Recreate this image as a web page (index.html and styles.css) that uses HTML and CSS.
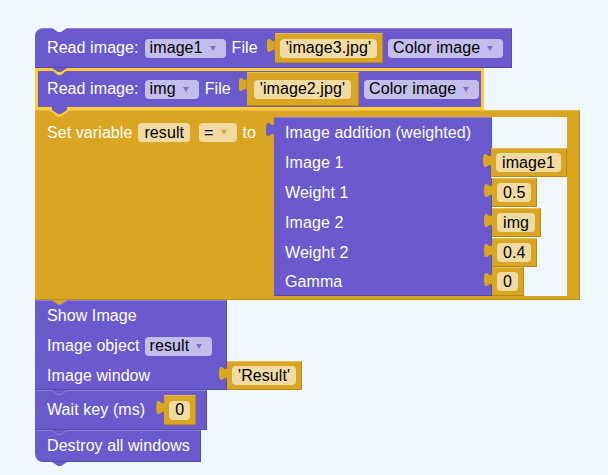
FILE: index.html
```html
<!DOCTYPE html>
<html>
<head>
<meta charset="utf-8">
<link rel="stylesheet" href="styles.css">
</head>
<body>
<div class="ws">
  <div class="stack">
    <div class="blk purple hl b1">
      <svg class="notch-cut" width="15" height="5" viewBox="0 0 15 5"><path d="M0 0 L6 4 H9 L15 0 Z" fill="#f0f8ff"/></svg>
      <span class="lbl">Read image:</span>
      <span class="dd ml6">image1<i class="arr"></i></span>
      <span class="lbl ml6">File</span>
      <span class="val ml17"><span class="fld">'image3.jpg'</span></span>
      <span class="dd ml5">Color image<i class="arr"></i></span>
      <svg class="ntab" width="15" height="5" viewBox="0 0 15 5"><path d="M0 0 L6 4 H9 L15 0 Z" fill="#6a5acd"/></svg>
    </div>

    <div class="blk purple b2">
      <svg class="selv-top" width="21" height="8" viewBox="0 0 21 8"><path d="M0 0 L9 7 H12 L21 0 Z" fill="#fc3"/></svg>
      <span class="lbl">Read image:</span>
      <span class="dd ml6">img<i class="arr"></i></span>
      <span class="lbl ml6">File</span>
      <span class="val big ml16"><span class="fld">'image2.jpg'</span></span>
      <span class="dd ml5">Color image<i class="arr"></i></span>
      <svg class="selv-bot" width="21" height="10" viewBox="0 0 21 10"><path d="M0 0 V3 L9 10 H12 L21 3 V0 Z" fill="#fc3"/><path d="M3 0 V3 L9 7 H12 L18 3 V0 Z" fill="#6a5acd"/></svg>
    </div>

    <div class="blk gold setvar">
      <div class="sv-head">
        <span class="lbl">Set variable</span>
        <span class="fld ml6">result</span>
        <span class="dd gdd ml9">=<i class="arr garr"></i></span>
        <span class="lbl ml6">to</span>
      </div>
      <div class="hole">
        <div class="hrow r1"><div class="fn first">Image addition (weighted)</div></div>
        <div class="hrow"><div class="fn">Image 1</div><span class="val hv"><span class="fld">image1</span></span></div>
        <div class="hrow"><div class="fn">Weight 1</div><span class="val hv"><span class="fld">0.5</span></span></div>
        <div class="hrow"><div class="fn">Image 2</div><span class="val hv"><span class="fld">img</span></span></div>
        <div class="hrow r5"><div class="fn">Weight 2</div><span class="val hv"><span class="fld">0.4</span></span></div>
        <div class="hrow r6"><div class="fn last">Gamma</div><span class="val hv"><span class="fld">0</span></span></div>
      </div>
      <svg class="ntab" width="15" height="6" viewBox="0 0 15 6"><path d="M0 0.5 L6 4.5 H9 L15 0.5" fill="none" stroke="#9488dc"/><path d="M0 0 L6 4 H9 L15 0 Z" fill="#daa520"/></svg>
    </div>

    <div class="show">
      <div class="blk purple hl show-body">
        <div class="srow s1"><span class="lbl">Show Image</span></div>
        <div class="srow"><span class="lbl">Image object</span><span class="dd ml5">result<i class="arr"></i></span></div>
        <div class="srow s3"><span class="lbl">Image window</span></div>
        <svg class="ntab" width="15" height="6" viewBox="0 0 15 6"><path d="M0 0.5 L6 4.5 H9 L15 0.5" fill="none" stroke="#9488dc"/><path d="M0 0 L6 4 H9 L15 0 Z" fill="#6a5acd"/></svg>
      </div>
      <span class="val hv"><span class="fld">'Result'</span></span>
    </div>

    <div class="blk purple hl wait">
      <span class="lbl">Wait key (ms)</span>
      <span class="val ml19"><span class="fld">0</span></span>
      <svg class="ntab" width="15" height="6" viewBox="0 0 15 6"><path d="M0 0.5 L6 4.5 H9 L15 0.5" fill="none" stroke="#9488dc"/><path d="M0 0 L6 4 H9 L15 0 Z" fill="#6a5acd"/></svg>
    </div>

    <div class="blk purple hl destroy">
      <span class="lbl">Destroy all windows</span>
      <svg class="ntab" width="15" height="5" viewBox="0 0 15 5"><path d="M0 0 L6 4 H9 L15 0 Z" fill="#6a5acd"/></svg>
    </div>
  </div>
</div>
</body>
</html>
```

FILE: styles.css
```css
* { box-sizing: border-box; }
html, body { margin: 0; height: 100%; }
body {
  background: #f0f8ff;
  font: 16px/16px "Liberation Sans", Arial, sans-serif;
  letter-spacing: 0.08px;
  color: #fff;
}
.ws { padding: 28px 0 0 35px; }
.stack { display: flex; flex-direction: column; align-items: flex-start; }

.blk { position: relative; display: flex; align-items: center; white-space: nowrap; }
.purple { background: #6a5acd; }
.gold { background: #daa520; }
.hl { box-shadow: inset 0 1px 0 rgba(255,255,255,.22), inset -1px -1px 0 rgba(0,0,0,.16); }

.lbl { color: #fff; }
.ml5 { margin-left: 5px; }
.ml6 { margin-left: 6px; }
.ml9 { margin-left: 9px; }
.ml16 { margin-left: 16px; }
.ml17 { margin-left: 17px; }
.ml19 { margin-left: 19px; }

.dd {
  display: flex; align-items: center;
  height: 19px; padding: 0 10px 0 5px;
  border-radius: 4px;
  background: rgba(255,255,255,.6);
  color: #000;
}
.arr {
  display: block; width: 0; height: 0; margin-left: 7px;
  border-left: 3px solid transparent;
  border-right: 3px solid transparent;
  border-top: 5px solid #7a6bd2;
}
.garr { border-top-color: #daa520; }

.fld {
  display: flex; align-items: center;
  height: 19px; padding: 0 6px;
  border-radius: 4px;
  background: rgba(255,255,255,.6);
  color: #000;
}

.val {
  position: relative;
  display: flex; align-items: center;
  height: 30px; padding: 0 6px 0 5px;
  background: #daa520;
  box-shadow: inset 0 1px 0 rgba(255,255,255,.25), inset -1px -1px 0 rgba(120,85,0,.35);
}
.val::before {
  content: "";
  position: absolute; left: -8px; top: 5px;
  width: 8px; height: 15px;
  background: #daa520;
  clip-path: path('M8,0 C8,10 0,-8 0,7.5 C0,23 8,5 8,15 Z');
}
.val.big { height: 34px; padding: 0 8px 0 7px; }
.val.hv { height: 29px; }

.notch-cut { position: absolute; left: 17px; top: 0; }
.ntab { position: absolute; left: 17px; top: 100%; z-index: 3; display: block; }

.b1 { height: 40px; padding: 0 9px 0 12px; border-top-left-radius: 8px; }
.b2 { height: 42px; border: 3px solid #fc3; padding: 0 2px 0 9px; }
.selv-top { position: absolute; left: 11px; top: -3px; z-index: 2; display: block; }
.selv-bot { position: absolute; left: 11px; top: 100%; z-index: 3; display: block; }

.setvar {
  align-items: flex-start;
  padding: 7px 13px 4px 0;
  box-shadow: inset 0 1px 0 rgba(255,255,255,.2), inset -1px -1px 0 rgba(120,85,0,.3);
}
.sv-head {
  display: flex; align-items: center;
  width: 239px; height: 31px; padding-left: 12px;
}
.hole {
  width: 293px;
  background: #f0f8ff;
  display: flex; flex-direction: column;
}
.hrow { display: flex; align-items: flex-start; height: 30px; }
.hrow.r1 { height: 31px; }
.hrow.r5, .hrow.r6 { height: 29px; }
.fn {
  position: relative;
  width: 218px; height: 100%;
  background: #6a5acd;
  display: flex; align-items: center;
  padding-left: 11px;
  color: #fff;
  box-shadow: inset -1px 0 0 rgba(0,0,0,.15);
}
.fn.first { box-shadow: inset 0 1px 0 rgba(255,255,255,.22), inset -1px 0 0 rgba(0,0,0,.15); }
.fn.last { box-shadow: inset -1px -1px 0 rgba(0,0,0,.18); }
.fn.first::before {
  content: "";
  position: absolute; left: -8px; top: 5px;
  width: 8px; height: 15px;
  background: #6a5acd;
  clip-path: path('M8,0 C8,10 0,-8 0,7.5 C0,23 8,5 8,15 Z');
}

.show { display: flex; align-items: flex-end; }
.show-body {
  flex-direction: column; align-items: stretch;
  width: 192px; padding-left: 12px;
}
.srow { display: flex; align-items: center; height: 30px; }
.srow.s1 { height: 31px; }
.srow.s3 { height: 29px; }

.wait { height: 40px; padding: 0 11px 0 12px; }
.destroy { height: 32px; padding: 0 11px 0 12px; border-bottom-left-radius: 8px; }
```
